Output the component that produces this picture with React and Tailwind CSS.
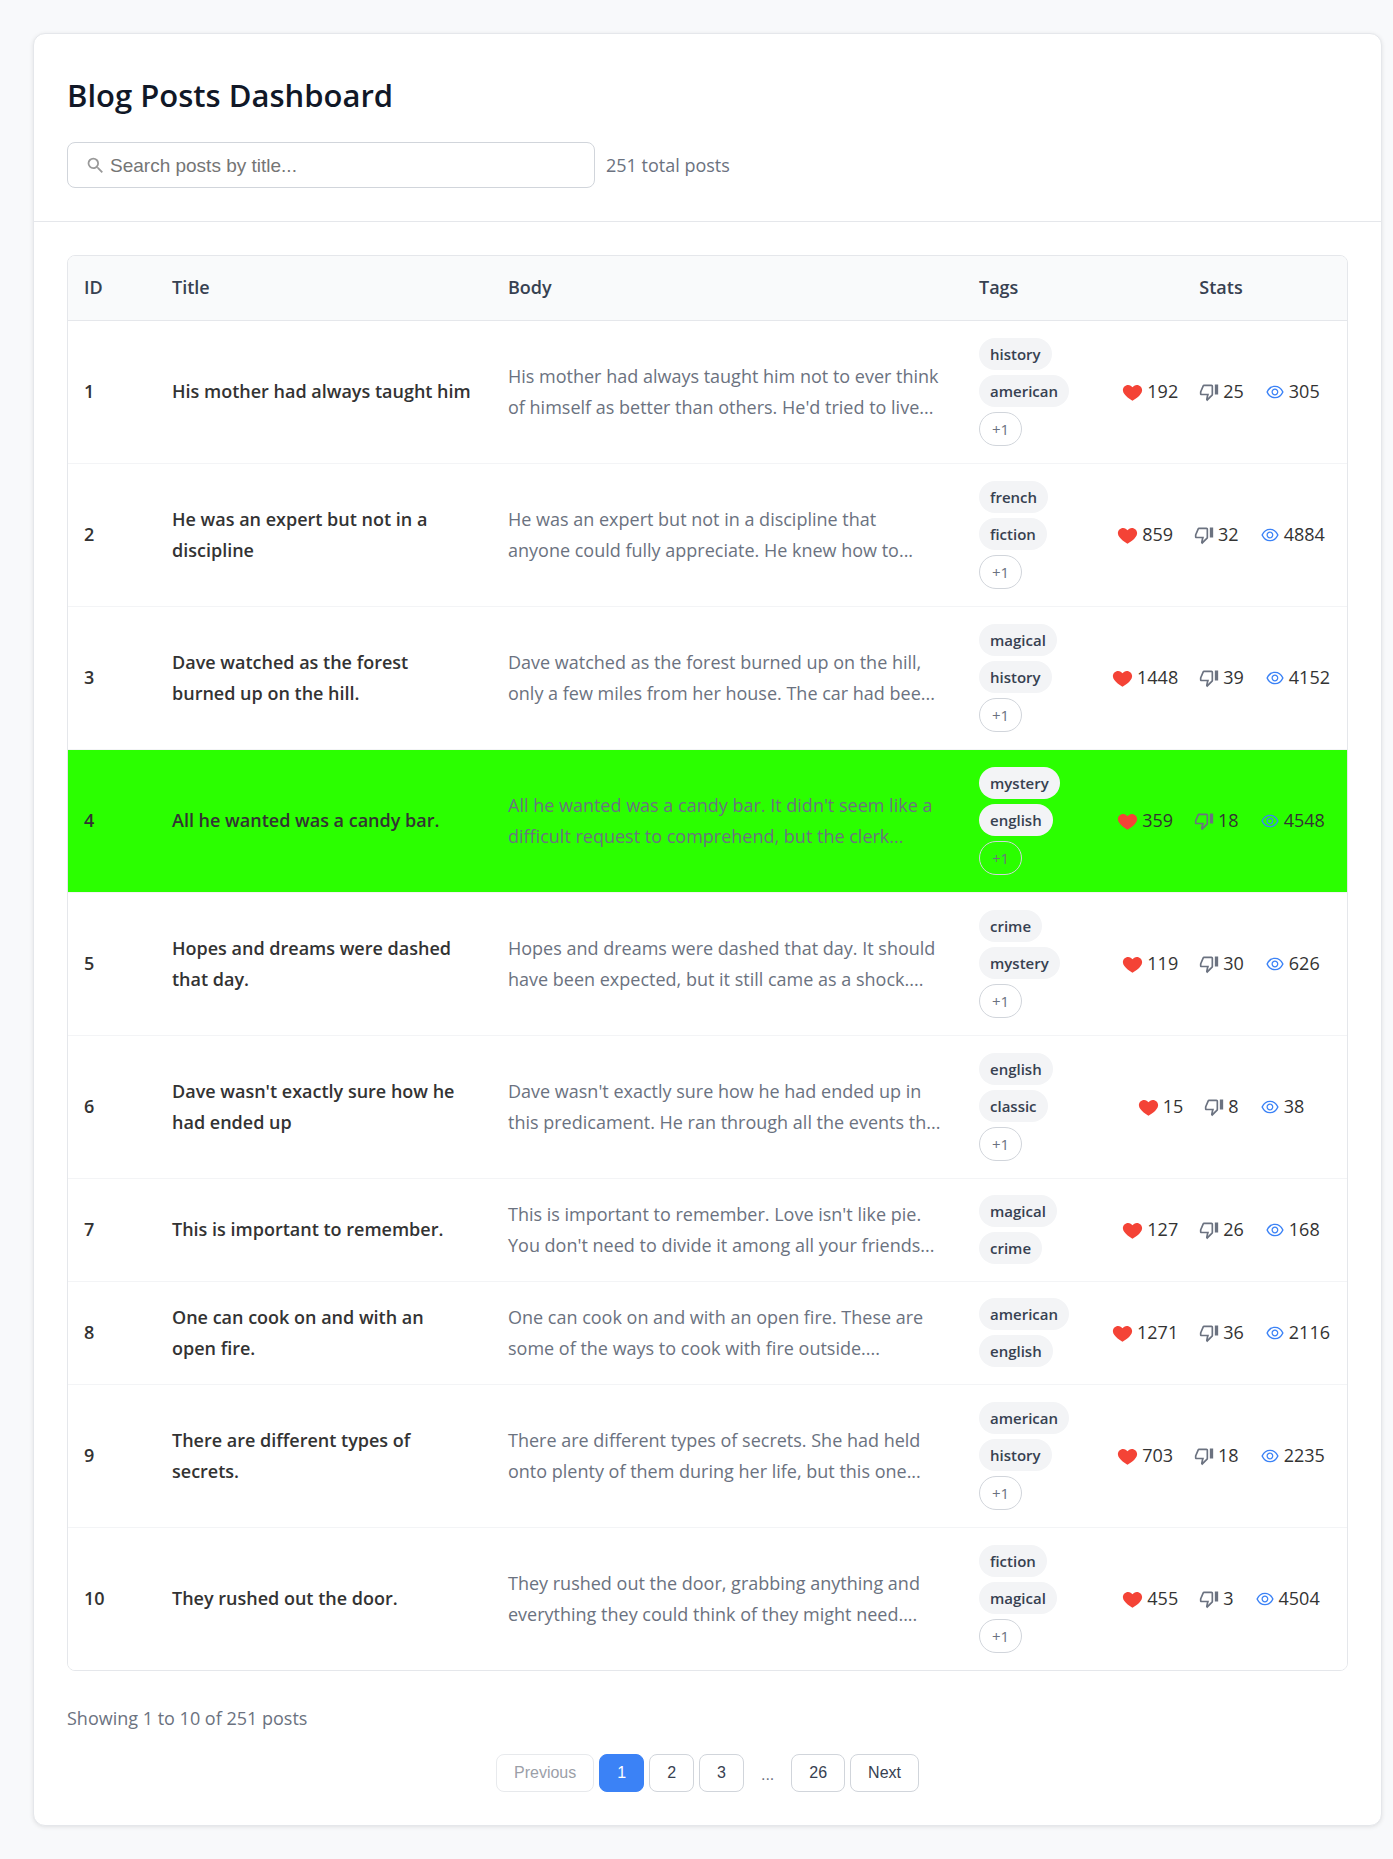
import React from "react";
import { MdSearch, MdOutlineThumbDown } from "react-icons/md";
import { FcLike } from "react-icons/fc";
import { AiOutlineEye } from "react-icons/ai";

const posts = [
  { id: 1, title: ["His mother had always taught him"], body: ["His mother had always taught him not to ever think", "of himself as better than others. He'd tried to live..."], tags: ["history", "american"], more: "+1", likes: 192, dislikes: 25, views: 305 },
  { id: 2, title: ["He was an expert but not in a", "discipline"], body: ["He was an expert but not in a discipline that", "anyone could fully appreciate. He knew how to..."], tags: ["french", "fiction"], more: "+1", likes: 859, dislikes: 32, views: 4884 },
  { id: 3, title: ["Dave watched as the forest", "burned up on the hill."], body: ["Dave watched as the forest burned up on the hill,", "only a few miles from her house. The car had bee..."], tags: ["magical", "history"], more: "+1", likes: 1448, dislikes: 39, views: 4152 },
  { id: 4, title: ["All he wanted was a candy bar."], body: ["All he wanted was a candy bar. It didn't seem like a", "difficult request to comprehend, but the clerk..."], tags: ["mystery", "english"], more: "+1", likes: 359, dislikes: 18, views: 4548, selected: true },
  { id: 5, title: ["Hopes and dreams were dashed", "that day."], body: ["Hopes and dreams were dashed that day. It should", "have been expected, but it still came as a shock...."], tags: ["crime", "mystery"], more: "+1", likes: 119, dislikes: 30, views: 626 },
  { id: 6, title: ["Dave wasn't exactly sure how he", "had ended up"], body: ["Dave wasn't exactly sure how he had ended up in", "this predicament. He ran through all the events th..."], tags: ["english", "classic"], more: "+1", likes: 15, dislikes: 8, views: 38 },
  { id: 7, title: ["This is important to remember."], body: ["This is important to remember. Love isn't like pie.", "You don't need to divide it among all your friends..."], tags: ["magical", "crime"], likes: 127, dislikes: 26, views: 168 },
  { id: 8, title: ["One can cook on and with an", "open fire."], body: ["One can cook on and with an open fire. These are", "some of the ways to cook with fire outside...."], tags: ["american", "english"], likes: 1271, dislikes: 36, views: 2116 },
  { id: 9, title: ["There are different types of", "secrets."], body: ["There are different types of secrets. She had held", "onto plenty of them during her life, but this one..."], tags: ["american", "history"], more: "+1", likes: 703, dislikes: 18, views: 2235 },
  { id: 10, title: ["They rushed out the door."], body: ["They rushed out the door, grabbing anything and", "everything they could think of they might need...."], tags: ["fiction", "magical"], more: "+1", likes: 455, dislikes: 3, views: 4504 },
];

function Lines({ lines }) {
  return lines.map((line) => (
    <span key={line} className="block whitespace-nowrap">
      {line}
    </span>
  ));
}

function Stat({ icon, value }) {
  return (
    <span className="flex items-center gap-1">
      {icon}
      {value}
    </span>
  );
}

function PostRow({ post }) {
  const height = post.more ? "h-[143px]" : "h-[103px]";
  const background = post.selected ? "bg-[#2bff00]" : "bg-white";
  return (
    <tr className={`border-b border-[#f3f4f6] last:border-b-0 ${height} ${background}`}>
      <td className="px-4 font-semibold">{post.id}</td>
      <td className="px-4 font-semibold">
        <Lines lines={post.title} />
      </td>
      <td className="px-4 text-[#6b7280]">
        <Lines lines={post.body} />
      </td>
      <td className="px-4">
        <div className="flex flex-col items-start gap-[5px] text-[15px] leading-8">
          {post.tags.map((tag) => (
            <span key={tag} className="rounded-full bg-[#f3f4f6] px-[11px] font-semibold text-[#374151]">
              {tag}
            </span>
          ))}
          {post.more && (
            <span className="rounded-full border border-[#d1d5db] px-3 font-medium text-[#6b7280]">{post.more}</span>
          )}
        </div>
      </td>
      <td>
        <div className="flex items-center justify-center gap-[21px]">
          <Stat icon={<FcLike size={21} />} value={post.likes} />
          <Stat icon={<MdOutlineThumbDown size={20} className="text-[#6b7280]" />} value={post.dislikes} />
          <Stat icon={<AiOutlineEye size={20} className="text-[#3b82f6]" />} value={post.views} />
        </div>
      </td>
    </tr>
  );
}

const pageButton = "h-[38px] rounded-lg border px-[17px]";

export default function App() {
  return (
    <div className="min-h-screen bg-[#f8f9fb] py-[33px] pr-[11px] pl-[33px] font-['Open_Sans',sans-serif] text-[18px] leading-[31px] text-[#333]">
      <main className="rounded-xl border border-[#e5e7eb] bg-white shadow-[0_1px_4px_rgba(0,0,0,0.1)]">
        <header className="border-b border-[#e5e7eb] p-[33px] pt-8">
          <h1 className="mb-[18px] text-[31px] leading-[58px] font-semibold text-[#111827]">Blog Posts Dashboard</h1>
          <div className="flex items-center gap-[11px]">
            <label className="flex h-[46px] w-[528px] items-center gap-1 rounded-lg border border-[#d1d5db] px-[17px] font-['Liberation_Sans',Arial,sans-serif] text-[19px]">
              <MdSearch size={21} className="text-[#999]" />
              <input
                type="text"
                aria-label="Search posts by title"
                placeholder="Search posts by title..."
                className="min-w-0 flex-1 outline-none placeholder:text-[#757575]"
              />
            </label>
            <span className="text-[#6b7280]">251 total posts</span>
          </div>
        </header>

        <section className="p-[33px]">
          <div className="overflow-hidden rounded-lg border border-[#e5e7eb]">
            <table className="w-full table-fixed border-collapse">
              <colgroup>
                <col className="w-[88px]" />
                <col className="w-[336px]" />
                <col />
                <col className="w-[132px]" />
                <col className="w-[252px]" />
              </colgroup>
              <thead>
                <tr className="h-16 border-b border-[#e5e7eb] bg-[#f9fafb] text-left text-[#374151]">
                  <th className="px-4 font-semibold">ID</th>
                  <th className="px-4 font-semibold">Title</th>
                  <th className="px-4 font-semibold">Body</th>
                  <th className="px-4 font-semibold">Tags</th>
                  <th className="px-4 text-center font-semibold">Stats</th>
                </tr>
              </thead>
              <tbody>
                {posts.map((post) => (
                  <PostRow key={post.id} post={post} />
                ))}
              </tbody>
            </table>
          </div>

          <p className="mt-8 mb-5 text-[#6b7280]">Showing 1 to 10 of 251 posts</p>
          <nav
            aria-label="Pagination"
            className="flex items-center justify-center gap-[5px] font-['Liberation_Sans',Arial,sans-serif] text-[16px] leading-5 text-[#374151]"
          >
            <button type="button" disabled className={`${pageButton} border-[#d1d5db] opacity-50`}>Previous</button>
            <button type="button" aria-current="page" className={`${pageButton} border-[#3b82f6] bg-[#3b82f6] text-white`}>1</button>
            <button type="button" className={`${pageButton} border-[#d1d5db]`}>2</button>
            <button type="button" className={`${pageButton} border-[#d1d5db]`}>3</button>
            <span className="px-3 pt-1 text-[#6b7280]">...</span>
            <button type="button" className={`${pageButton} border-[#d1d5db]`}>26</button>
            <button type="button" className={`${pageButton} border-[#d1d5db]`}>Next</button>
          </nav>
        </section>
      </main>
    </div>
  );
}
